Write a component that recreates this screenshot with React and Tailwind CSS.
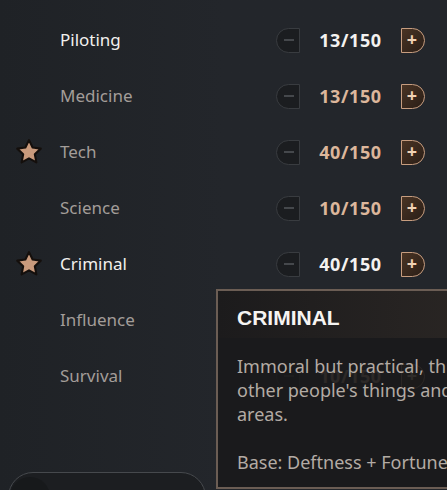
const skills = [
  { name: 'Piloting', value: '13/150', active: true, star: false },
  { name: 'Medicine', value: '13/150', active: false, star: false },
  { name: 'Tech', value: '40/150', active: false, star: true },
  { name: 'Science', value: '10/150', active: false, star: false },
  { name: 'Criminal', value: '40/150', active: true, star: true },
  { name: 'Influence', value: '10/150', active: false, star: false },
  { name: 'Survival', value: '10/150', active: false, star: false },
]

function Star() {
  return (
    <svg width="28" height="28" viewBox="0 0 24 24">
      <path
        d="M12 1.8l3.1 6.4 7 .9-5.1 4.8 1.3 7L12 17.5l-6.3 3.4 1.3-7-5.1-4.8 7-.9z"
        fill="#c99a7c"
        stroke="#140f0c"
        strokeWidth="1.8"
        strokeLinejoin="round"
      />
    </svg>
  )
}

function SkillRow({ skill }) {
  return (
    <div className="flex h-14 items-center">
      <div className="flex w-[60px] justify-center pr-[3px]">{skill.star ? <Star /> : null}</div>
      <span className={`text-[17px] ${skill.active ? 'text-[#f2f0ee]' : 'text-[#a39d99]'}`}>{skill.name}</span>
      <div className="ml-auto mr-[22px] flex items-center">
        <button className="flex h-[25px] w-[24px] items-center justify-center rounded-l-full border border-[#393c40] bg-[#1b1d20]">
          <span className="ml-[2px] block h-[2px] w-[10px] bg-[#45484c]" />
        </button>
        <span
          className={`w-[101px] text-center text-[18px] font-bold tracking-[0.6px] ${skill.active ? 'text-[#f4f2f0]' : 'text-[#dcb69b]'}`}
        >
          {skill.value}
        </span>
        <button className="flex h-[25px] w-[24px] items-center justify-center rounded-r-full border border-[#c79d7f] bg-gradient-to-br from-[#4a3424] to-[#2a1e17] text-[18px] font-bold leading-none text-[#f0d2b4]">
          <span className="-mt-[2px] mr-[2px]">+</span>
        </button>
      </div>
    </div>
  )
}

export default function App() {
  return (
    <div
      className="relative h-[490px] w-[447px] overflow-hidden bg-gradient-to-r from-[#1f2226] via-[#23262b] to-[#23262b]"
      style={{ fontFamily: '"Noto Sans", "Open Sans", sans-serif' }}
    >
      <div className="flex flex-col pt-[12px]">
        {skills.map((skill) => (
          <SkillRow key={skill.name} skill={skill} />
        ))}
      </div>

      <div className="absolute left-[8px] top-[472px] flex h-[50px] w-[198px] items-center rounded-full border border-[#46494d] bg-[#1c1e21]">
        <div className="ml-[1px] flex h-[40px] w-[40px] items-start justify-center rounded-full bg-[#17191b] pt-[6px] text-[14px] text-[#3c3f43]">
          ✓
        </div>
        <span className="ml-[52px] mt-[6px] text-[16px] font-bold tracking-[2px] text-[#4a4d51]">SAVE</span>
      </div>

      <div className="absolute left-[216px] top-[289px] h-[200px] w-[260px] border-2 border-[#6b5d54] bg-[#19191b]/90">
        <div className="flex h-[47px] items-center bg-gradient-to-r from-[#1c1b1c] to-[#2a2624] pl-[19px]">
          <span
            className="mt-[6px] text-[21px] font-bold text-[#f6f4f2]"
            style={{ fontFamily: '"Liberation Sans", Arial, sans-serif' }}
          >
            CRIMINAL
          </span>
        </div>
        <div className="whitespace-nowrap px-[19px] pt-[16px] text-[18px] leading-[24px] text-[#b3aba4]">
          <p>Immoral but practical, this skill covers</p>
          <p>other people's things and restricted</p>
          <p>areas.</p>
          <p className="mt-[24px]">Base: Deftness + Fortune</p>
        </div>
      </div>
    </div>
  )
}
